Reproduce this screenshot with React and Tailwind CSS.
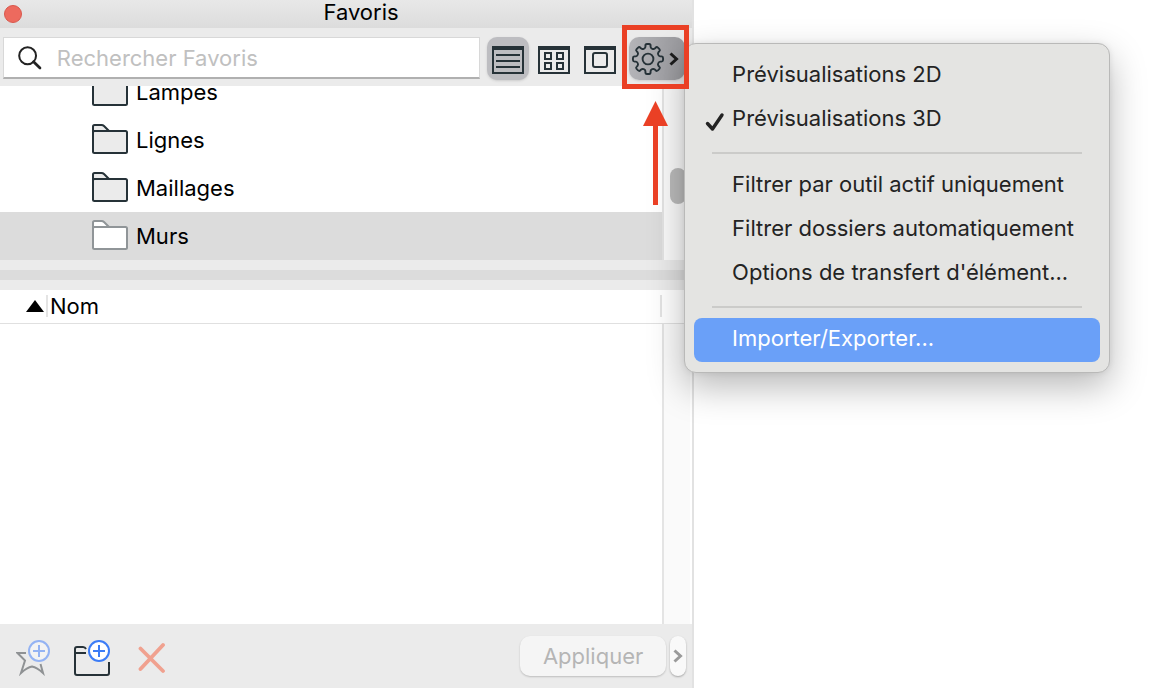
import React from "react";

const INK = "#263238";

const folders = [
  { name: "Lampes" },
  { name: "Lignes" },
  { name: "Maillages" },
  { name: "Murs", selected: true },
];

const menuGroups = [
  [{ label: "Prévisualisations 2D" }, { label: "Prévisualisations 3D", checked: true }],
  [
    { label: "Filtrer par outil actif uniquement" },
    { label: "Filtrer dossiers automatiquement" },
    { label: "Options de transfert d'élément..." },
  ],
  [{ label: "Importer/Exporter...", active: true }],
];

function polar(r, deg) {
  const a = (deg * Math.PI) / 180;
  return `${(18 + r * Math.cos(a)).toFixed(2)} ${(18 + r * Math.sin(a)).toFixed(2)}`;
}

function gearPath() {
  let d = "";
  for (let i = 0; i < 8; i++) {
    const c = i * 45 - 90;
    d += `${i === 0 ? "M" : "L"}${polar(12.4, c - 12)}`;
    d += `L${polar(13.6, c - 11)}Q${polar(15.2, c - 10)} ${polar(15.1, c - 4)}`;
    d += `L${polar(15.1, c + 4)}Q${polar(15.2, c + 10)} ${polar(13.6, c + 11)}`;
    d += `L${polar(12.4, c + 12)}C${polar(10.8, c + 15)} ${polar(10.8, c + 30)} ${polar(12.4, c + 33)}`;
  }
  return d + "Z";
}

function GearIcon() {
  return (
    <svg width="36" height="36" viewBox="0 0 36 36" fill="none" stroke={INK} strokeWidth="1.9" strokeLinejoin="round" aria-hidden="true">
      <path d={gearPath()} />
      <circle cx="18" cy="18" r="5.4" />
    </svg>
  );
}

function Chevron({ color }) {
  return (
    <svg width="10" height="16" viewBox="0 0 10 16" fill="none" stroke={color} strokeWidth="3" aria-hidden="true">
      <path d="M1.5 2.5 7.5 8l-6 5.500" />
    </svg>
  );
}

function ViewIcon({ kind }) {
  return (
    <svg width="32" height="28" viewBox="0 0 32 28" fill="none" stroke={INK} strokeWidth="2" aria-hidden="true">
      <path d="M1 1h30v26H1z" />
      <path d="M0 2h32" strokeWidth="4" />
      {kind === "list" && <path d="M4 9h24M4 15h24M4 21h24" />}
      {kind === "grid" && <path d="M7 7h6v6H7zM19 7h6v6h-6zM7 17h6v6H7zM19 17h6v6h-6z" />}
      {kind === "large" && <rect x="9" y="7" width="14" height="14" rx="2" />}
    </svg>
  );
}

function FolderIcon({ selected }) {
  return (
    <svg width="36" height="30" viewBox="0 0 36 30" stroke={selected ? "#909598" : INK} strokeWidth="2" fill={selected ? "#fff" : "#ebebeb"} strokeLinejoin="round" aria-hidden="true">
      <path d="M1 8V2.500Q1 1 2.500 1H9.500Q11 1 12 2L17 7" />
      <rect x="1" y="7" width="34" height="22" rx="1.500" />
    </svg>
  );
}

function PlusBadge({ cx, cy, color, fill }) {
  return (
    <g stroke={color} strokeWidth="2" fill="none">
      <circle cx={cx} cy={cy} r="10" fill={fill} />
      <path d={`M${cx - 6} ${cy}h12M${cx} ${cy - 6}v12`} />
    </g>
  );
}

function Row({ name, selected }) {
  return (
    <li className={selected ? "bg-[#dcdcdc]" : ""}>
      <button type="button" className="flex h-12 w-full items-center gap-2 pl-[92px] text-left">
        <span className="pb-[2px]">
          <FolderIcon selected={selected} />
        </span>
        <span>{name}</span>
      </button>
    </li>
  );
}

function Menu() {
  return (
    <div role="menu" className="absolute top-[6px] left-[55px] w-[426px] rounded-xl border border-[#b9b9b8] bg-[#e4e4e2] px-[9px] py-[10px] text-[#232323] shadow-[0_14px_36px_rgba(0,0,0,0.28),0_0_6px_rgba(0,0,0,0.08)]">
      {menuGroups.map((group, i) => (
        <div key={i}>
          {i > 0 && <hr className="mx-[18px] my-[10px] border-t-2 border-[#cbcbc9]" />}
          {group.map((item) => (
            <button
              key={item.label}
              type="button"
              role={item.checked ? "menuitemcheckbox" : "menuitem"}
              aria-checked={item.checked}
              className={`flex h-11 w-full items-center rounded-lg text-left whitespace-nowrap ${item.active ? "bg-[#6aa0f8] text-white" : ""}`}
            >
              <span className="flex w-[38px] shrink-0 justify-center pt-1 pl-1">
                {item.checked && (
                  <svg width="20" height="20" viewBox="0 0 20 20" fill="none" stroke="#232323" strokeWidth="3.400" strokeLinecap="round" strokeLinejoin="round" aria-hidden="true">
                    <path d="M2.500 11.500 7.500 17 17 3" />
                  </svg>
                )}
              </span>
              <span className="pb-1">{item.label}</span>
            </button>
          ))}
        </div>
      ))}
    </div>
  );
}

function Toolbar() {
  return (
    <div className="flex h-[58px] items-center bg-[#ebebeb] pt-[2px] pr-[7px] pl-[3px]">
      <label className="flex h-[42px] min-w-0 flex-1 items-center gap-[15px] border border-b-2 border-[#d8d8d8] border-b-[#b0b0b0] bg-white pl-[14px]">
        <svg width="26" height="26" viewBox="0 0 26 26" fill="none" stroke="#232323" aria-hidden="true">
          <circle cx="10.500" cy="10.500" r="9.200" strokeWidth="2.200" />
          <path d="m17 17 7 7" strokeWidth="3" strokeLinecap="round" />
        </svg>
        <input type="text" aria-label="Rechercher Favoris" placeholder="Rechercher Favoris" className="w-full min-w-0 bg-transparent outline-none placeholder:text-[#c0c0c0]" />
      </label>
      <div className="ml-[7px] flex gap-1">
        {["list", "grid", "large"].map((kind) => (
          <button key={kind} type="button" aria-label={kind} className={`flex h-[43px] w-[42px] items-center justify-center rounded-[10px] pt-[3px] ${kind === "list" ? "bg-[#bdbdc1] shadow-sm" : ""}`}>
            <ViewIcon kind={kind} />
          </button>
        ))}
      </div>
      <div className="relative ml-2">
        <button type="button" aria-label="Options" aria-haspopup="menu" className="flex h-[43px] w-14 items-center gap-[3px] rounded-[10px] bg-linear-to-r from-[#b4b4b8] to-[#98989c] pt-[2px] pl-[1px] shadow-sm">
          <GearIcon />
          <Chevron color="#1c1c1c" />
        </button>
        <Menu />
        <div className="pointer-events-none absolute -top-3 -left-[7px] h-16 w-[67px] border-[5px] border-[#ea4025]" />
        <svg className="pointer-events-none absolute top-16 left-[14px]" width="26" height="105" viewBox="0 0 26 105" fill="#ea4025" aria-hidden="true">
          <path d="M12.500 0 25 25h-10v79h-5V25H0z" />
        </svg>
      </div>
    </div>
  );
}

function ActionBar() {
  return (
    <footer className="flex h-16 shrink-0 items-center bg-[#ebebeb] pr-[6px] pl-4">
      <div className="flex flex-1 items-center gap-6 pt-1">
        <button type="button" aria-label="Ajouter aux favoris">
          <svg width="34" height="36" viewBox="0 0 34 36" fill="none" aria-hidden="true">
            <path d="M10 13H1.500L9 20.500 5 33q6-5.500 11-6.500 5 1 11 6.500L24.500 24" stroke="#8f9294" strokeWidth="2" />
            <PlusBadge cx={23} cy={11} color="#94b3f3" fill="#f3f3f3" />
          </svg>
        </button>
        <button type="button" aria-label="Nouveau dossier">
          <svg width="36" height="36" viewBox="0 0 36 36" fill="none" aria-hidden="true">
            <path d="M12 9Q11 7 9 7H3Q1 7 1 9v24q0 2 2 2h30q2 0 2-2V22M1 13h11" stroke={INK} strokeWidth="2" />
            <PlusBadge cx={25} cy={11} color="#3c7cf6" fill="#fff" />
          </svg>
        </button>
        <button type="button" aria-label="Supprimer" className="pl-1">
          <svg width="28" height="32" viewBox="0 0 28 32" stroke="#f0a18f" strokeWidth="3.800" strokeLinecap="round" aria-hidden="true">
            <path d="M25 3 2.500 27M2.500 6.500 25 29" />
          </svg>
        </button>
      </div>
      <button type="button" disabled className="h-10 w-[146px] rounded-[10px] bg-[#f5f5f5] pb-px text-[#b5b5b5] shadow-[0_1px_2px_rgba(0,0,0,0.2)]">
        Appliquer
      </button>
      <button type="button" aria-label="Plus" className="ml-1 flex h-10 w-4 items-center justify-center rounded-[10px] bg-[#f9f9f9] shadow-[0_1px_2px_rgba(0,0,0,0.3)]">
        <Chevron color="#9a9a9a" />
      </button>
    </footer>
  );
}

export default function App() {
  return (
    <main className="min-h-screen overflow-hidden bg-white font-[Inter,sans-serif] text-[22px] leading-7 text-black">
      <section className="flex min-h-screen w-[60.2%] flex-col border-r-2 border-[#e2e2e2]">
        <header className="flex h-7 items-center bg-linear-to-b from-[#e8e8e8] to-[#dcdcdc] pl-1">
          <button type="button" aria-label="Fermer" className="size-[18px] rounded-full border border-[#d9574c] bg-[#ed6a5e]" />
          <h1 className="flex-1 pb-1 pl-2 text-center">Favoris</h1>
        </header>
        <Toolbar />
        <div className="flex h-[174px]">
          <ul className="flex min-w-0 flex-1 flex-col justify-end overflow-hidden">
            {folders.map((f) => (
              <Row key={f.name} {...f} />
            ))}
          </ul>
          <div className="flex w-[30px] justify-center border-l-2 border-[#e4e4e4] bg-[#fafafa] pt-[82px]">
            <div className="h-9 w-4 rounded-full bg-[#bbbbbb]" />
          </div>
        </div>
        <div className="h-[30px] border-y-[10px] border-[#ebebeb] bg-[#dcdcdc]" />
        <div className="flex flex-1 flex-col">
          <table className="w-full">
            <thead>
              <tr className="border-b border-[#e0e0e0]">
                <th className="h-[33px] py-0 pl-[26px] text-left font-normal">
                  <span className="flex items-center">
                    <svg width="18" height="12" viewBox="0 0 18 12" aria-hidden="true">
                      <path d="M9 0l9 12H0z" />
                    </svg>
                    <span className="ml-[2px] h-[22px] border-l-2 border-[#e4e4e4]" />
                    <span className="ml-[2px]">Nom</span>
                    <span className="mr-[30px] ml-auto h-[22px] border-l-2 border-[#e4e4e4]" />
                  </span>
                </th>
              </tr>
            </thead>
          </table>
          <div className="flex flex-1 justify-end pr-[2px]">
            <div className="w-7 border-l-2 border-[#e4e4e4] bg-[#fafafa]" />
          </div>
        </div>
        <ActionBar />
      </section>
    </main>
  );
}
